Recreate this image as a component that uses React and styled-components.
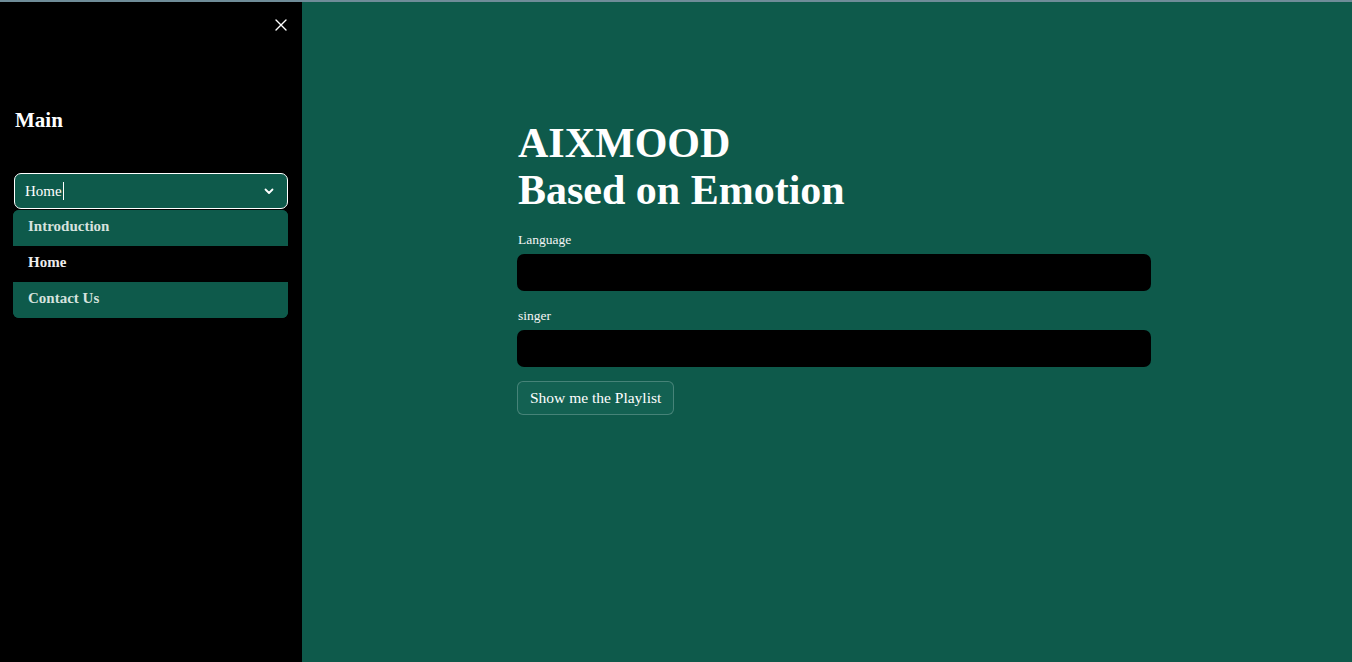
import React from "react";
import styled, { createGlobalStyle } from "styled-components";

const Global = createGlobalStyle`
  html, body { margin: 0; padding: 0; height: 100%; }
  body { background: #0e5a4b; font-family: "Liberation Serif", "DejaVu Serif", serif; color: #fff; }
  #root { height: 100%; }
`;

const Page = styled.div`
  display: flex;
  flex-direction: column;
  height: 662px;
  overflow: hidden;
`;

const TopLine = styled.div`
  height: 2px;
  background: #6f8c98;
  flex: none;
`;

const Body = styled.div`
  display: flex;
  flex: 1;
  min-height: 0;
`;

const Sidebar = styled.aside`
  width: 302px;
  flex: none;
  background: #000;
  display: flex;
  flex-direction: column;
  padding: 0 14px 0 13px;
  box-sizing: border-box;
`;

const CloseRow = styled.div`
  display: flex;
  justify-content: flex-end;
  padding-top: 15px;
  margin-right: -1px;
  height: 20px;
`;

const CloseBtn = styled.button`
  background: none;
  border: none;
  padding: 0;
  width: 16px;
  height: 16px;
  display: flex;
  align-items: center;
  justify-content: center;
  cursor: pointer;
`;

const SideTitle = styled.h2`
  margin: 70px 0 0 2px;
  font-size: 21px;
  font-weight: 700;
  line-height: 26px;
  color: #fff;
`;

const SelectWrap = styled.div`
  margin-top: 40px;
  display: flex;
  flex-direction: column;
  gap: 1px;
`;

const SelectBox = styled.div`
  height: 36px;
  box-sizing: border-box;
  margin-left: 1px;
  border: 1px solid #fff;
  border-radius: 7px;
  background: #0e5a4b;
  display: flex;
  align-items: center;
  padding: 0 12px 0 10px;
  font-size: 15px;
  color: #fff;
`;

const Caret = styled.span`
  display: inline-block;
  width: 1px;
  height: 18px;
  background: #fff;
  margin-left: 1px;
`;

const Spacer = styled.div`flex: 1;`;

const Menu = styled.ul`
  list-style: none;
  margin: 0;
  padding: 0;
  border-radius: 6px;
  overflow: hidden;
  background: #0e5a4b;
`;

const Option = styled.li`
  height: 36px;
  display: flex;
  align-items: center;
  padding: 0 0 3px 15px;
  box-sizing: border-box;
  font-size: 15px;
  font-weight: 700;
  color: ${(p) => (p.$active ? "#ececec" : "#d6e2de")};
  background: ${(p) => (p.$active ? "#000" : "#0e5a4b")};
`;

const Main = styled.main`
  flex: 1;
  display: flex;
  justify-content: center;
`;

const Content = styled.div`
  width: 634px;
  padding-top: 118px;
  margin-left: 14px;
  display: flex;
  flex-direction: column;
`;

const Title = styled.h1`
  margin: 0 0 0 1px;
  font-size: 42px;
  line-height: 47px;
  font-weight: 700;
  color: #fff;
`;

const Label = styled.label`
  display: block;
  font-size: 13.5px;
  color: #f4f4f4;
  margin: 0 0 6px 1px;
  line-height: 16px;
`;

const Field = styled.div`
  margin-top: ${(p) => p.$top}px;
`;

const Input = styled.input`
  display: block;
  width: 100%;
  height: 37px;
  box-sizing: border-box;
  background: #000;
  border: none;
  border-radius: 7px;
  outline: none;
  color: #fff;
  padding: 0 12px;
`;

const Button = styled.button`
  align-self: flex-start;
  margin-top: 14px;
  height: 34px;
  padding: 0 12px;
  background: #136152;
  border: 1px solid rgba(255, 255, 255, 0.22);
  border-radius: 6px;
  color: #fff;
  font-family: inherit;
  font-size: 15.5px;
  cursor: pointer;
`;

export default function App() {
  return (
    <Page>
      <Global />
      <TopLine />
      <Body>
        <Sidebar>
          <CloseRow>
            <CloseBtn aria-label="close">
              <svg width="12" height="12" viewBox="0 0 12 12">
                <path d="M1 1 L11 11 M11 1 L1 11" stroke="#fff" strokeWidth="1.4" strokeLinecap="round" />
              </svg>
            </CloseBtn>
          </CloseRow>
          <SideTitle>Main</SideTitle>
          <SelectWrap>
            <SelectBox>
              Home<Caret />
              <Spacer />
              <svg width="12" height="12" viewBox="0 0 12 12">
                <path d="M2.5 4.5 L6 8 L9.5 4.5" fill="none" stroke="#fff" strokeWidth="1.8" strokeLinecap="round" strokeLinejoin="round" />
              </svg>
            </SelectBox>
            <Menu>
              <Option>Introduction</Option>
              <Option $active>Home</Option>
              <Option>Contact Us</Option>
            </Menu>
          </SelectWrap>
        </Sidebar>
        <Main>
          <Content>
            <Title>
              AIXMOOD
              <br />
              Based on Emotion
            </Title>
            <Field $top={18}>
              <Label>Language</Label>
              <Input />
            </Field>
            <Field $top={17}>
              <Label>singer</Label>
              <Input />
            </Field>
            <Button>Show me the Playlist</Button>
          </Content>
        </Main>
      </Body>
    </Page>
  );
}
